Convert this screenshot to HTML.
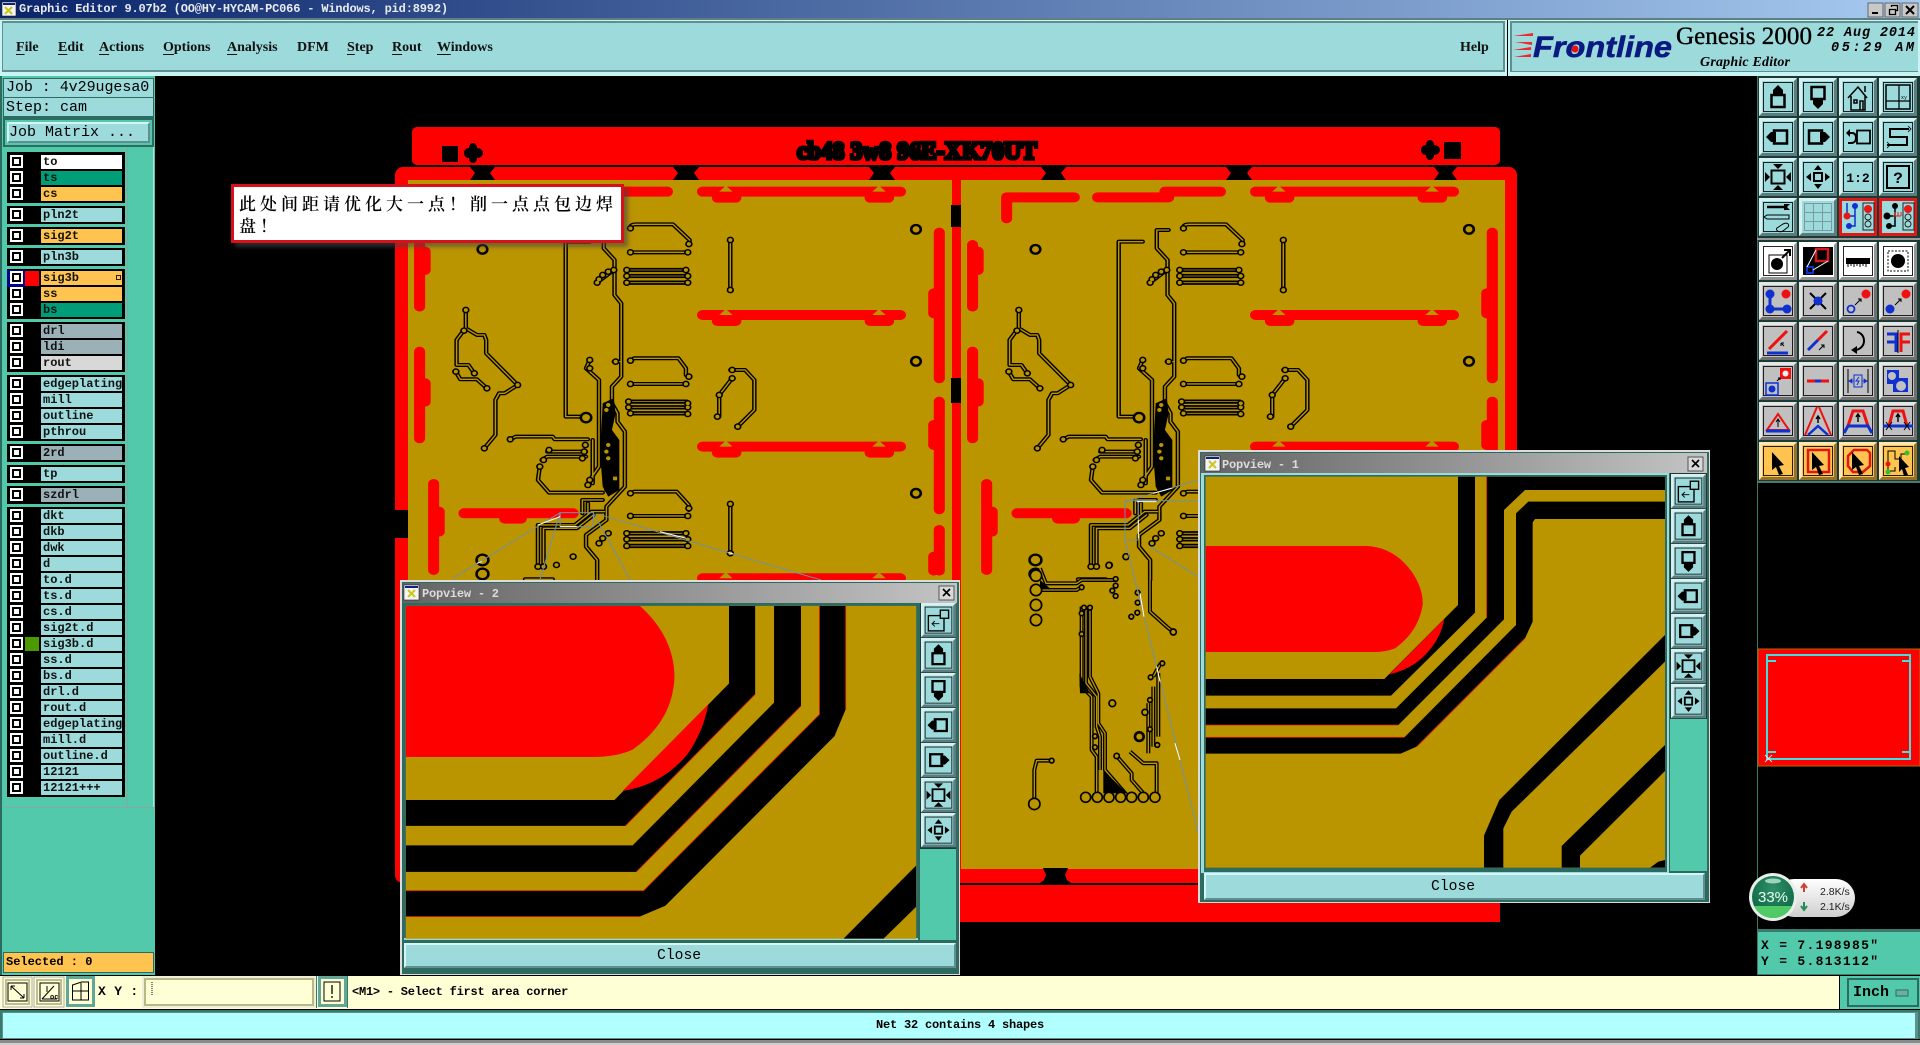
<!DOCTYPE html>
<html><head><meta charset="utf-8"><title>Graphic Editor</title>
<style>
html,body{margin:0;padding:0;background:#000;width:1920px;height:1045px;overflow:hidden}
body{position:relative;font-family:"Liberation Mono",monospace;color:#000}
div,span,b,i{position:absolute;display:block}
#art{position:absolute;left:0;top:0}
.t{white-space:pre}
.mn{font:bold 14px/16px "Liberation Serif",serif;top:40px;white-space:pre;color:#111}
.mn u{position:static;display:inline;text-underline-offset:3px}
.g{background:#000;left:7px;width:118px}
.r{left:7px;width:118px;height:16px;margin-top:1px}
.r i{left:5px;top:2px;width:5px;height:5px;background:#fff;border:2px solid #000;outline:2px solid #fff}
.r b{left:34px;top:0;width:79px;height:14px;padding-left:2px;background:#9cdadb;font:bold 12px/14px "Liberation Mono",monospace;overflow:hidden;white-space:pre;color:#111}
.r b.o{background:#ffc34f}.r b.w{background:#fff}.r b.e{background:#009e78}.r b.s{background:#9cb0b8}.r b.l{background:#d8d8d8}
#tip{left:231px;top:184px;width:379px;height:48px;padding:5px 3px 0 5px;border:3px solid #d8101a;background:#fff;box-shadow:4px 4px 4px rgba(70,70,70,.6);font:17px/22px "Noto Serif CJK SC","Liberation Serif",serif;letter-spacing:4px;font-weight:600;color:#000}
#tip span{position:static;display:block;white-space:pre}
</style></head><body>

<svg id="art" width="1920" height="1045" viewBox="0 0 1920 1045" xmlns="http://www.w3.org/2000/svg">
<defs>
<linearGradient id="tbar" x1="0" x2="1" y1="0" y2="0"><stop offset="0" stop-color="#0a246a"/><stop offset="1" stop-color="#a6caf0"/></linearGradient>
<linearGradient id="pbar" x1="0" x2="1" y1="0" y2="0"><stop offset="0" stop-color="#646464"/><stop offset="1" stop-color="#c4c4c4"/></linearGradient>
<radialGradient id="gb" cx=".5" cy=".3" r=".7"><stop offset="0" stop-color="#2f8f68"/><stop offset="1" stop-color="#0c6642"/></radialGradient>
<linearGradient id="pill" x1="0" x2="0" y1="0" y2="1"><stop offset="0" stop-color="#fff"/><stop offset="1" stop-color="#cfcfcf"/></linearGradient>

<g id="b"><rect width="38" height="38"/><path d="M0 0H38L35 3H3V35L0 38Z" fill="#fff" fill-opacity=".6"/><path d="M38 38H0L3 35H35V3L38 0Z" fill="#000" fill-opacity=".42"/><rect x="4.500" y="4.500" width="29" height="29" fill="none" stroke="#000" stroke-opacity=".85"/></g>
<g id="b0"><rect width="38" height="38"/><path d="M0 0H38L35 3H3V35L0 38Z" fill="#fff" fill-opacity=".6"/><path d="M38 38H0L3 35H35V3L38 0Z" fill="#000" fill-opacity=".42"/></g>

<g id="iU"><path d="M12.500 17h13v12h-13z" fill="none" stroke="#000" stroke-width="2.500"/><path d="M19 7l5 5v5H14v-5z"/></g>
<g id="iD"><path d="M12.500 9h13v12h-13z" fill="none" stroke="#000" stroke-width="2.500"/><path d="M19 31l5-5v-5H14v5z"/></g>
<g id="iL"><path d="M15 12.500h13v13H15z" fill="none" stroke="#000" stroke-width="2.500"/><path d="M7 19l5-5h5v10h-5z"/></g>
<g id="iR"><path d="M10 12.500h13v13H10z" fill="none" stroke="#000" stroke-width="2.500"/><path d="M31 19l-5-5h-5v10h5z"/></g>
<g id="iF"><rect x="12.500" y="12.500" width="13" height="13" fill="none" stroke="#000" stroke-width="2"/><path d="M19 11l-5-5h10zM19 27l-5 5h10zM11 19l-5-5v10zM27 19l5-5v10z"/></g>
<g id="iS"><rect x="15" y="15" width="8" height="8" fill="none" stroke="#000" stroke-width="2"/><path d="M19 7l-4 5h8zM19 31l-4-5h8zM7 19l5-4v8zM31 19l-5-4v8z"/></g>
<g id="iZ"><rect x="8" y="14" width="17" height="17" fill="none" stroke="#000" stroke-width="1.500"/><rect x="21" y="8" width="9" height="9" fill="#9cdadb" stroke="#000" stroke-width="1.500"/><path d="M20 23h-8M15 20l-3 3 3 3" fill="none" stroke="#000"/></g>
<g id="cur"><path d="M13 10l12 13-5 1 4 8-4 1-3-8-4 3z"/></g>

<g id="tp" fill="none" stroke-linejoin="round" stroke-linecap="round">
<path d="M648 325Q650 313 665 313H765L810 360V375M650 397H805M650 722L660 715H780L800 745V765L808 772M650 792H800M650 1120L660 1115H775L808 1155V1170M650 1188H805M920 360V510M920 1155V1300M540 365H475V890H530M610 330H578V385L607 420V525L625 550V725H605M625 725V770L600 800V850L615 880V905L635 935V1100L585 1160V1200L530 1245V1280L560 1320V1380M605 450L560 488M205 570V625L235 645H255L260 660V700L345 795L310 820H295L285 840V945L255 985M200 630L180 660V735H212L228 760M178 755L190 778H235L262 805M325 958L340 950H440L445 958H535M405 1040L400 1080L430 1118H575M425 995H530M410 1020L425 1010H530M540 720L530 745L565 780V1040L540 1080M548 960V1090M590 1050L585 1110M920 750H960L985 780V870L940 920M925 775L890 825V890M400 1340V1215H500L545 1175H580M415 1340V1225H505L550 1185M520 1140H575M520 1140V1180M535 1150V1180M365 1378H440"/>
</g>
<g id="tq" fill="none" stroke-linecap="butt">
<path d="M640 450H805M640 468H805M640 488H805M645 845H805M645 862H805M650 880H805M640 1240H805M640 1258H805M640 1278H805"/>
</g>
<g id="pads" fill="none" stroke-linecap="round">
<path d="M650 325h.1M808 372h.1M650 397h.1M805 397h.1M640 450h.1M800 450h.1M640 468h.1M805 468h.1M640 488h.1M805 488h.1M920 360h.1M920 510h.1M650 722h.1M808 770h.1M650 792h.1M800 792h.1M645 845h.1M805 850h.1M645 862h.1M805 862h.1M650 880h.1M805 882h.1M650 1120h.1M808 1165h.1M650 1188h.1M805 1188h.1M640 1240h.1M800 1240h.1M640 1258h.1M805 1258h.1M640 1278h.1M805 1278h.1M920 1152h.1M920 1300h.1M205 570h.1M200 632h.1M228 760h.1M178 755h.1M262 805h.1M345 795h.1M255 985h.1M325 958h.1M885 890h.1M940 920h.1M925 750h.1M925 775h.1M890 825h.1M610 725h.1M540 720h.1M540 745h.1M605 450h.1M590 455h.1M575 465h.1M565 478h.1M560 488h.1M528 975h.1M525 995h.1M520 1015h.1M405 1040h.1M415 1020h.1M430 990h.1M540 1080h.1M535 1095h.1M590 1240h.1M575 1255h.1M565 1270h.1M400 1340h.1M415 1340h.1M495 1310h.1M450 1335h.1"/>
</g>
<g id="rb" fill="none" stroke="#f00" stroke-width="30" stroke-linecap="round"><path d="M845 0H1380"/><path d="M885 18H935M1298 18H1348"/><path d="M908 -18l-18 18h36z" fill="#bb9500" stroke="none"/><path d="M1322 -18l-18 18h36z" fill="#bb9500" stroke="none"/></g>
<g id="board">
<g transform="translate(390 120) scale(.3699 .3333)">
<use href="#rb" transform="translate(0 215)"/><use href="#rb" transform="translate(0 585)"/><use href="#rb" transform="translate(0 980)"/><use href="#rb" transform="translate(0 1375)"/>
<g fill="none" stroke="#f00" stroke-width="30" stroke-linecap="round">
<path d="M80 375V560M80 695V955M118 1092V1350M200 1180H495M1485 338V775M1485 845V1168M1485 1230V1352"/>
<path d="M95 395V450M95 790V845M133 1175V1235M310 1196H355M1470 520V580M1470 915V975M1470 1310V1352"/>
<path d="M175 232H355M418 232H610M600 215H750M172 232V295"/>
</g>
<use href="#tp" stroke="#000" stroke-width="12"/><use href="#tp" stroke="#bb9500" stroke-width="4"/>
<use href="#tq" stroke="#000" stroke-width="13"/><use href="#tq" stroke="#bb9500" stroke-width="2.500"/>
<path d="M575 850L605 835 610 880 600 930 620 960V1110L590 1130 575 1100 568 1000Z"/>
<use href="#pads" stroke="#000" stroke-width="20"/><use href="#pads" stroke="#bb9500" stroke-width="11"/>
<g fill="#bb9500" stroke="#000" stroke-width="7"><circle cx="1422" cy="328" r="13"/><circle cx="1422" cy="724" r="13"/><circle cx="1422" cy="1120" r="13"/><circle cx="250" cy="388" r="13"/><circle cx="530" cy="893" r="14"/><circle cx="250" cy="1320" r="16"/><circle cx="250" cy="1362" r="16"/></g>
<g fill="#bb9500"><circle cx="590" cy="855" r="6"/><circle cx="585" cy="870" r="6"/><circle cx="590" cy="975" r="6"/><circle cx="585" cy="995" r="6"/><circle cx="590" cy="1015" r="6"/><rect x="603" y="1070" width="11" height="11"/></g>
</g></g>
<clipPath id="c2"><rect x="16" y="107" width="1404" height="991"/></clipPath>
<clipPath id="c1"><rect x="32" y="95" width="1378" height="1173"/></clipPath>
</defs>

<!-- title -->
<rect width="1920" height="19" fill="url(#tbar)"/>
<rect x="0" y="18" width="1920" height="2" fill="#5f8080"/>
<rect x="2" y="2" width="14" height="14" fill="#f5f5f5" stroke="#222" stroke-width=".6"/><rect x="3" y="3" width="12" height="2" fill="#10208a"/><path d="M5 7l7 7M12 7l-7 7" stroke="#c8c820" stroke-width="2.200"/>
<g stroke="#666"><rect x="1868" y="3" width="15" height="14" fill="#c8c8c8"/><rect x="1885" y="3" width="15" height="14" fill="#c8c8c8"/><rect x="1902" y="3" width="16" height="14" fill="#c8c8c8"/></g>
<path d="M1872 13h6" stroke="#000" stroke-width="2"/><path d="M1889.500 9.500h6v5h-6zM1891.500 7v-1.500h6v5h-2" fill="none" stroke="#000" stroke-width="1.300"/><path d="M1906 6l8 8M1914 6l-8 8" stroke="#000" stroke-width="2"/>

<!-- menu bar -->
<rect x="0" y="20" width="1507" height="56" fill="#c8f4f4"/><rect x="2" y="21" width="1503" height="51" fill="#5f8f8f"/><rect x="3" y="23" width="1500" height="47" fill="#9cdadb"/>
<rect x="1508" y="20" width="412" height="56" fill="#c8f4f4"/><rect x="1510" y="21" width="408" height="51" fill="#5f8f8f"/><rect x="1512" y="23" width="406" height="48" fill="#9cdadb"/>
<path d="M1513 36l20-3v3zM1515 42h17v3zM1513 50l18-3v3zM1514 57l17-3v3z" fill="#f0282c"/>
<text x="1533" y="57" font-family="Liberation Sans" font-weight="bold" font-style="italic" font-size="30" fill="#0a1a80" stroke="#0a1a80" stroke-width=".6" textLength="139" lengthAdjust="spacingAndGlyphs">Frontline</text>
<circle cx="1575" cy="49" r="3.500" fill="#e81018"/>
<text x="1676" y="44" font-family="Liberation Serif" font-size="25" fill="#000" stroke="#000" stroke-width=".35" textLength="136" lengthAdjust="spacingAndGlyphs">Genesis 2000</text>
<text x="1700" y="66" font-family="Liberation Serif" font-size="14" font-weight="bold" font-style="italic" fill="#000" textLength="90">Graphic Editor</text>
<text x="1817" y="36" font-family="Liberation Mono" font-size="13.500" font-weight="bold" font-style="italic" textLength="98">22 Aug 2014</text>
<text x="1831" y="51" font-family="Liberation Mono" font-size="13.500" font-weight="bold" font-style="italic" textLength="83">05:29 AM</text>

<!-- left panel -->
<rect x="0" y="76" width="155" height="900" fill="#52c9aa"/><rect x="0" y="76" width="2" height="900" fill="#2d6b60"/><rect x="127" y="147" width="1" height="660" fill="#86a8a0"/><rect x="153" y="147" width="1" height="660" fill="#a8e8d4"/>
<rect x="3" y="78" width="151" height="40" fill="#2d6b60"/><rect x="4" y="79" width="149" height="18" fill="#9cdadb"/><rect x="4" y="98" width="149" height="18" fill="#9cdadb"/>
<rect x="3" y="118" width="151" height="29" fill="#2d6b60"/><rect x="5" y="120" width="147" height="25" fill="#52c9aa"/><rect x="7" y="122" width="143" height="21" fill="#9cdadb"/><path d="M7 122h143l-2 2H9v17l-2 2z" fill="#d4f6f6"/><path d="M150 143H7l2-2h139V124l2-2z" fill="#5f8f8f"/>
<rect x="3" y="807" width="151" height="1" fill="#86a8a0"/>
<rect x="3" y="952" width="151" height="21" fill="#2d6b60"/><rect x="4" y="953" width="149" height="19" fill="#ffc34f"/>

<!-- PCB -->
<rect x="412" y="127" width="1088" height="38" rx="5" fill="#f00"/>
<rect x="395" y="167" width="1122" height="716" rx="8" fill="#f00"/>
<rect x="412" y="885" width="1088" height="37" fill="#f00"/>
<rect x="408" y="180" width="544" height="689" fill="#bb9500"/><rect x="961" y="180" width="544" height="689" fill="#bb9500"/>
<g><path d="M470 167h25l-5 6 5 7h-25l5-7zM673 167h26l-5 6 5 7h-26l5-7zM869 167h26l-5 6 5 7h-26l5-7zM1041 167h25l-5 6 5 7h-25l5-7zM1226 167h26l-5 6 5 7h-26l5-7zM1434 167h23l-5 6 5 7h-23l5-7z"/>
<rect x="951" y="205" width="10" height="22"/><rect x="951" y="378" width="10" height="25"/><rect x="395" y="510" width="13" height="28"/>
<path d="M1040 883l4-3 2-5-3-7h25l-3 7 2 5 4 3z"/>
<rect x="442" y="146" width="16" height="16"/><path d="M473 143c3 0 4 3 4 5 3 0 6 2 6 5s-3 5-6 5c0 2-1 5-4 5s-4-3-4-5c-3 0-5-2-5-5s2-5 5-5c0-2 1-5 4-5z"/>
<rect x="1444" y="142" width="17" height="17"/><path d="M1430 140c3 0 4 3 4 5 3 0 6 2 6 5s-3 5-6 5c0 2-1 5-4 5s-4-3-4-5c-3 0-5-2-5-5s2-5 5-5c0-2 1-5 4-5z"/>
<text x="797" y="159" font-family="Liberation Serif" font-weight="bold" font-size="25" stroke="#000" stroke-width="3.500" textLength="240" lengthAdjust="spacingAndGlyphs">cb48 3w8 96E-XK70UT</text></g>
<use href="#board"/><use href="#board" transform="translate(553 0)"/>
<!-- lower right traces -->
<g transform="translate(940 460) scale(.3333)">
<g fill="none" stroke="#000" stroke-width="12" stroke-linejoin="round">
<path d="M630 360V455L680 500L705 520M300 325L318 370H410L425 360H525M290 390H410L425 380M425 440V680L455 710V870L470 890V1010M438 440V670L470 710V800L480 830V930M450 440V650L475 700V790L495 820V930L560 1005M335 902H290L283 930V1030M530 888L575 940V960L610 1000M570 875L610 910H650V1000M640 680V860M655 640V830M625 730V880M662 610L640 650"/>
</g>
<g fill="none" stroke="#bb9500" stroke-width="4" stroke-linejoin="round">
<path d="M630 360V455L680 500L705 520M300 325L318 370H410L425 360H525M290 390H410L425 380M425 440V680L455 710V870L470 890V1010M438 440V670L470 710V800L480 830V930M450 440V650L475 700V790L495 820V930L560 1005M335 902H290L283 930V1030M530 888L575 940V960L610 1000M570 875L610 910H650V1000M640 680V860M655 640V830M625 730V880M662 610L640 650"/>
</g>
<path d="M490 930L560 1000H490ZM418 640L450 700H420ZM300 360L330 385H300Z"/>
<g fill="#bb9500" stroke="#000" stroke-width="5"><circle cx="288" cy="347" r="17"/><circle cx="288" cy="390" r="17"/><circle cx="288" cy="435" r="17"/><circle cx="288" cy="480" r="17"/><circle cx="437" cy="1012" r="15"/><circle cx="472" cy="1012" r="15"/><circle cx="507" cy="1012" r="15"/><circle cx="542" cy="1012" r="15"/><circle cx="575" cy="1012" r="15"/><circle cx="610" cy="1012" r="15"/><circle cx="645" cy="1012" r="15"/><circle cx="283" cy="1032" r="17"/><circle cx="598" cy="830" r="13" stroke-width="8"/><circle cx="517" cy="730" r="10"/><circle cx="507" cy="316" r="9"/><circle cx="558" cy="290" r="9"/><circle cx="527" cy="357" r="7"/><circle cx="527" cy="377" r="7"/><circle cx="517" cy="392" r="7"/><circle cx="527" cy="408" r="7"/><circle cx="425" cy="382" r="7"/><circle cx="593" cy="398" r="7"/><circle cx="593" cy="428" r="7"/><circle cx="592" cy="458" r="7"/><circle cx="574" cy="470" r="7"/><circle cx="630" cy="720" r="7"/><circle cx="615" cy="757" r="9"/><circle cx="630" cy="808" r="7"/><circle cx="652" cy="855" r="7"/><circle cx="632" cy="652" r="7"/><circle cx="667" cy="610" r="7"/><circle cx="425" cy="460" r="7"/><circle cx="432" cy="443" r="7"/><circle cx="450" cy="443" r="7"/><circle cx="425" cy="522" r="7"/><circle cx="465" cy="829" r="7"/><circle cx="465" cy="862" r="7"/><circle cx="335" cy="902" r="7"/><circle cx="530" cy="888" r="8"/><circle cx="700" cy="516" r="9"/></g>
<g fill="none" stroke="#7390a4" stroke-width="3"><path d="M555 125L775 60M555 240L775 1120M630 260L775 350M555 122V240H595V122ZM555 122H775"/></g>
<path d="M600 400L612 470M650 620L660 665M640 100L695 85M590 125H650M595 180V235M705 850L720 900" stroke="#fff" stroke-width="3" fill="none"/>
</g>
<!-- left lens lines -->
<g transform="translate(390 120) scale(.3699 .3333)" fill="none">
<path d="M460 1178L170 1375M460 1178L405 1380M550 1180L650 1380M570 1185L1165 1380M460 1178H550V1220H460Z" stroke="#7390a4" stroke-width="3"/>
<path d="M400 1215L460 1190M460 1220H505M730 1235L800 1255M915 1298L928 1302M235 1330L248 1325" stroke="#fff" stroke-width="3"/>
</g>

<!-- Popup 2 -->
<rect x="400" y="580" width="560" height="395" fill="#dcdcdc"/><rect x="402" y="582" width="557" height="392" fill="#2d6b60"/><rect x="403" y="583" width="554" height="20" fill="url(#pbar)"/>
<rect x="403" y="603" width="516" height="338" fill="#2d6b60"/><rect x="404" y="938" width="514" height="2" fill="#9cdadb"/>
<rect x="920" y="603" width="36" height="337" fill="#52c9aa"/><rect x="920" y="603" width="36" height="246" fill="#1c3a34"/>
<rect x="404" y="585" width="15" height="15" fill="#f5f5f5" stroke="#222" stroke-width=".6"/><rect x="405" y="586" width="13" height="2" fill="#10208a"/><path d="M408 590l7 7M415 590l-7 7" stroke="#c8c820" stroke-width="2"/>
<text x="422" y="597" font-family="Liberation Mono" font-size="12" font-weight="bold" fill="#dcdcdc" textLength="77">Popview - 2</text>
<rect x="939" y="586" width="15" height="14" fill="#d8d8d8" stroke="#555"/><path d="M943 589l7 7M950 589l-7 7" stroke="#000" stroke-width="1.700"/>
<svg x="400" y="570" width="570" height="410" viewBox="0 0 1568 1221" preserveAspectRatio="none"><g clip-path="url(#c2)">
<rect width="1568" height="1221" fill="#bb9500"/>
<path d="M16 107H660Q755 200 755 320Q750 450 640 535Q600 555 540 557H16Z" fill="#f00"/>
<path d="M905 107H977V370L620 762H16V685H590L905 338Z"/>
<path d="M848 400Q835 480 790 550Q720 640 612 658Z" fill="#f00"/>
<path d="M1029 107H1103V405L650 899H16V820H640L1029 395Z"/>
<path d="M1154 107H1226V415L1195 495 730 1000 660 1032H16V955H670L1154 430Z"/>
<path d="M1420 880V1003L1330 1098H1220Z"/>
<path d="M1154 107V430L670 955H16M1226 107V415M1103 405L650 899M977 370L620 762M16 1032H660" fill="none" stroke="#d02000" stroke-width="2.500"/>
</g></svg>
<g transform="translate(404 943)"><rect width="552" height="25" fill="#9cdadb"/><path d="M0 0H552L550 2H2V23L0 25Z" fill="#d4f6f6"/><path d="M552 25H0L2 23H550V2L552 0Z" fill="#5f8f8f"/></g>
<text x="657" y="959" font-family="Liberation Mono" font-size="14.700">Close</text>
<g transform="translate(921 603) scale(.92 .9)"><use href="#b" fill="#9cdadb"/><use href="#iZ"/></g>
<g transform="translate(921 638) scale(.92 .9)"><use href="#b" fill="#9cdadb"/><use href="#iU"/></g>
<g transform="translate(921 673) scale(.92 .9)"><use href="#b" fill="#9cdadb"/><use href="#iD"/></g>
<g transform="translate(921 708) scale(.92 .9)"><use href="#b" fill="#9cdadb"/><use href="#iL"/></g>
<g transform="translate(921 743) scale(.92 .9)"><use href="#b" fill="#9cdadb"/><use href="#iR"/></g>
<g transform="translate(921 778) scale(.92 .9)"><use href="#b" fill="#9cdadb"/><use href="#iF"/></g>
<g transform="translate(921 813) scale(.92 .9)"><use href="#b" fill="#9cdadb"/><use href="#iS"/></g>

<!-- Popup 1 -->
<rect x="1198" y="450" width="512" height="453" fill="#dcdcdc"/><rect x="1200" y="452" width="509" height="450" fill="#2d6b60"/><rect x="1201" y="453" width="506" height="20" fill="url(#pbar)"/>
<rect x="1201" y="473" width="468" height="400" fill="#9cdadb"/><rect x="1204" y="475" width="463" height="397" fill="#2d6b60"/>
<rect x="1670" y="473" width="37" height="398" fill="#52c9aa"/><rect x="1670" y="473" width="37" height="246" fill="#1c3a34"/>
<rect x="1205" y="456" width="15" height="15" fill="#f5f5f5" stroke="#222" stroke-width=".6"/><rect x="1206" y="457" width="13" height="2" fill="#10208a"/><path d="M1209 461l7 7M1216 461l-7 7" stroke="#c8c820" stroke-width="2"/>
<text x="1222" y="468" font-family="Liberation Mono" font-size="12" font-weight="bold" fill="#dcdcdc" textLength="77">Popview - 1</text>
<rect x="1688" y="457" width="15" height="14" fill="#d8d8d8" stroke="#555"/><path d="M1692 460l7 7M1699 460l-7 7" stroke="#000" stroke-width="1.700"/>
<svg x="1195" y="445" width="520" height="470" viewBox="0 0 1560 1410" preserveAspectRatio="none"><g clip-path="url(#c1)">
<rect width="1560" height="1410" fill="#bb9500"/>
<path d="M32 303H520Q600 310 650 380Q685 430 683 480Q670 560 600 610Q570 622 530 621H32Z" fill="#f00"/>
<path d="M789 95H840V503L588 752H32V702H568L789 480Z"/>
<path d="M748 522Q735 590 680 640Q640 675 583 688Z" fill="#f00"/>
<path d="M875 95H1410V135H990L927 195V523L610 840H32V790H603L875 518Z"/>
<path d="M963 205L1000 170H1410V222H1020L1013 232V530L990 580 665 905 617 926H32V877H628L963 540Z"/>
<path d="M1410 570V650L950 1100 925 1150V1268H867V1172L913 1065Z"/>
<path d="M1410 900V978L1155 1232V1268H1100V1203Z"/>
<path d="M1365 1268L1390 1250 1410 1245V1268Z"/>
<path d="M875 95V518M32 840H610M32 877H628M990 580L665 905" fill="none" stroke="#d02000" stroke-width="2.500"/>
</g></svg>
<g transform="translate(1204 873)"><rect width="501" height="27" fill="#9cdadb"/><path d="M0 0H501L499 2H2V25L0 27Z" fill="#d4f6f6"/><path d="M501 27H0L2 25H499V2L501 0Z" fill="#5f8f8f"/></g>
<text x="1431" y="890" font-family="Liberation Mono" font-size="14.700">Close</text>
<g transform="translate(1671 474) scale(.92 .9)"><use href="#b" fill="#9cdadb"/><use href="#iZ"/></g>
<g transform="translate(1671 509) scale(.92 .9)"><use href="#b" fill="#9cdadb"/><use href="#iU"/></g>
<g transform="translate(1671 544) scale(.92 .9)"><use href="#b" fill="#9cdadb"/><use href="#iD"/></g>
<g transform="translate(1671 579) scale(.92 .9)"><use href="#b" fill="#9cdadb"/><use href="#iL"/></g>
<g transform="translate(1671 614) scale(.92 .9)"><use href="#b" fill="#9cdadb"/><use href="#iR"/></g>
<g transform="translate(1671 649) scale(.92 .9)"><use href="#b" fill="#9cdadb"/><use href="#iF"/></g>
<g transform="translate(1671 684) scale(.92 .9)"><use href="#b" fill="#9cdadb"/><use href="#iS"/></g>

<!-- right panel -->
<rect x="1757" y="76" width="163" height="406" fill="#1c3a34"/>
<rect x="1757" y="76" width="1" height="900" fill="#3a7a6c"/>
<rect x="1757" y="238" width="163" height="2" fill="#9a9a9a"/>
<g transform="translate(1759 78)"><use href="#b" fill="#9cdadb"/><use href="#iU"/></g>
<g transform="translate(1799 78)"><use href="#b" fill="#9cdadb"/><use href="#iD"/></g>
<g transform="translate(1839 78)"><use href="#b" fill="#9cdadb"/><path d="M9 20L19 9l9 11M12 18v14h14V18M15 22h3v3h-3zM21 32v-9h3v9M26 8v6" fill="none" stroke="#000" stroke-width="1.500"/></g>
<g transform="translate(1879 78)"><use href="#b" fill="#9cdadb"/><rect x="7" y="7" width="24" height="24" fill="none" stroke="#000" stroke-width="1.500"/><path d="M7 23H31M20 7V31" stroke="#000" stroke-width="1.200"/><text x="22" y="21" font-size="5" font-family="Liberation Mono">xy</text></g>

<g transform="translate(1759 118)"><use href="#b" fill="#9cdadb"/><use href="#iL"/></g>
<g transform="translate(1799 118)"><use href="#b" fill="#9cdadb"/><use href="#iR"/></g>
<g transform="translate(1839 118)"><use href="#b" fill="#9cdadb"/><rect x="18" y="12.500" width="13" height="13" fill="none" stroke="#000" stroke-width="1.800"/><path d="M9 15h4c3 0 4 2 4 5s-2 5-5 5H9" fill="none" stroke="#000" stroke-width="2"/><path d="M7 15l4-4v8z"/></g>
<g transform="translate(1879 118)"><use href="#b" fill="#9cdadb"/><path d="M30 11H11V19H28V27H8" fill="none" stroke="#000" stroke-width="2"/><path d="M29 8l3 3-3 3M8 24l3 3-3 3" fill="none" stroke="#000" stroke-width=".8"/></g>

<g transform="translate(1759 158)"><use href="#b" fill="#9cdadb"/><use href="#iF"/></g>
<g transform="translate(1799 158)"><use href="#b" fill="#9cdadb"/><use href="#iS"/></g>
<g transform="translate(1839 158)"><use href="#b" fill="#9cdadb"/><text x="19" y="24" text-anchor="middle" font-family="Liberation Mono" font-weight="bold" font-size="13">1:2</text></g>
<g transform="translate(1879 158)"><use href="#b" fill="#9cdadb"/><rect x="8" y="8" width="22" height="22" fill="none" stroke="#000" stroke-width="2"/><text x="19" y="25" text-anchor="middle" font-family="Liberation Mono" font-weight="bold" font-size="16">?</text></g>

<g transform="translate(1759 198)"><use href="#b" fill="#9cdadb"/><path d="M8 9H27" stroke="#000" stroke-width="2.500"/><path d="M25 6h6l-3 3 3 3h-6z"/><path d="M8 17H30V21H8L5 19zM24 26c4-2 7 0 5 3l-5 4c-4 2-8-1-6-3z" fill="none" stroke="#000"/></g>
<g transform="translate(1799 198)"><use href="#b0" fill="#9cdadb"/><path d="M5.500 5.500H32.500V32.500H5.500ZM14.500 5.500V32.500M23.500 5.500V32.500M5.500 14.500H32.500M5.500 23.500H32.500" fill="none" stroke="#7a9a9c"/></g>
<g transform="translate(1839 198)"><rect width="38" height="38" fill="#e01818"/><rect x="3" y="3" width="32" height="32" fill="#9cdadb"/><rect x="24" y="5" width="11" height="27" fill="none" stroke="#222"/><circle cx="29" cy="11" r="4" fill="#e81818"/><circle cx="29" cy="19" r="3" fill="none" stroke="#222"/><circle cx="29" cy="26" r="3" fill="none" stroke="#222"/><path d="M16 7V18H8M8 18V5M16 18V28H10" fill="none" stroke="#1030d0" stroke-width="1.500"/><circle cx="16" cy="8" r="3" fill="#1030d0"/><circle cx="8" cy="18" r="3.500" fill="#e81818"/><circle cx="10" cy="28" r="3" fill="#1030d0"/></g>
<g transform="translate(1879 198)"><rect width="38" height="38" fill="#e01818"/><rect x="3" y="3" width="32" height="32" fill="#9cdadb"/><rect x="24" y="5" width="11" height="27" fill="none" stroke="#222"/><circle cx="29" cy="11" r="4" fill="#e81818"/><circle cx="29" cy="19" r="3" fill="none" stroke="#222"/><circle cx="29" cy="26" r="3" fill="none" stroke="#222"/><path d="M16 7V28H10M8 18H16" fill="none" stroke="#000" stroke-width="1.500"/><path d="M14 18h8M16 18v-4M19 18v-4M22 18v-4" stroke="#e81818" fill="none"/><circle cx="16" cy="8" r="3"/><circle cx="8" cy="18" r="3.500"/><circle cx="10" cy="28" r="3"/></g>

<!-- row 5 white -->
<g transform="translate(1759 242)"><use href="#b" fill="#fff"/><rect x="10" y="13" width="18" height="18" fill="none" stroke="#000"/><circle cx="18" cy="22" r="6"/><path d="M23 16l7-7M25 8h6v6" stroke="#000" stroke-width="2" fill="none"/></g>
<g transform="translate(1799 242)"><use href="#b0" fill="#fff"/><rect x="4" y="5" width="30" height="28"/><rect x="17" y="7" width="12" height="12" fill="none" stroke="#d81818" stroke-width="2.500"/><rect x="8" y="25" width="6" height="6" fill="none" stroke="#1030d0" stroke-width="2"/><path d="M17 8L8 25M29 19L14 28" stroke="#fff"/></g>
<g transform="translate(1839 242)"><use href="#b" fill="#fff"/><rect x="7" y="16" width="24" height="6"/><path d="M9 22v3M12 22v2M15 22v3M18 22v2M21 22v3M24 22v2M27 22v3" stroke="#000"/></g>
<g transform="translate(1879 242)"><use href="#b" fill="#fff"/><rect x="9" y="9" width="20" height="20" fill="none" stroke="#000" stroke-dasharray="2 1.500"/><circle cx="19" cy="19" r="7"/></g>

<!-- row 6 gray -->
<g transform="translate(1759 282)"><use href="#b" fill="#c0c0c0"/><path d="M11 13V27H28" stroke="#1030d0" stroke-width="3" fill="none"/><circle cx="11" cy="12" r="4.500" fill="#1030d0"/><circle cx="11" cy="27" r="4.500" fill="#1030d0"/><circle cx="28" cy="27" r="4.500" fill="#1030d0"/><circle cx="27" cy="12" r="4.500" fill="#f01010"/></g>
<g transform="translate(1799 282)"><use href="#b" fill="#c0c0c0"/><path d="M11 11l16 16M27 11L11 27" stroke="#000" stroke-width="2"/><circle cx="19" cy="19" r="4.500" fill="#1030d0"/></g>
<g transform="translate(1839 282)"><use href="#b" fill="#c0c0c0"/><circle cx="27" cy="12" r="4.500" fill="#f01010"/><circle cx="12" cy="27" r="3.500" fill="none" stroke="#1030d0" stroke-width="1.800"/><path d="M16 23l6-6M19 17h3v3" stroke="#000" fill="none"/></g>
<g transform="translate(1879 282)"><use href="#b" fill="#c0c0c0"/><circle cx="27" cy="12" r="4.500" fill="#f01010"/><circle cx="11" cy="27" r="4.500" fill="#1030d0"/><path d="M16 23l6-6M19 17h3v3" stroke="#000" fill="none"/></g>

<!-- row 7 -->
<g transform="translate(1759 322)"><use href="#b" fill="#c0c0c0"/><path d="M10 27L28 9" stroke="#f01010" stroke-width="3"/><path d="M8 31H29" stroke="#1030d0" stroke-width="3"/><path d="M25 24l-3-3M22 21v3M22 21h3" stroke="#000" fill="none"/></g>
<g transform="translate(1799 322)"><use href="#b" fill="#c0c0c0"/><path d="M9 28L19 18" stroke="#1030d0" stroke-width="3"/><path d="M19 18L28 9" stroke="#f01010" stroke-width="3"/><path d="M20 28l5-5M22 23h3v3" stroke="#000" fill="none"/></g>
<g transform="translate(1839 322)"><use href="#b" fill="#c0c0c0"/><path d="M18 10c5 1 7 5 7 9s-3 8-8 9" fill="none" stroke="#000" stroke-width="2"/><path d="M12 28l6-4v8z"/></g>
<g transform="translate(1879 322)"><use href="#b" fill="#c0c0c0"/><path d="M8 12H17V30M8 20H17" stroke="#1030d0" stroke-width="3" fill="none"/><path d="M19 8V31" stroke="#000"/><path d="M31 12H22V30M22 20H31" stroke="#f01010" stroke-width="3" fill="none"/></g>

<!-- row 8 -->
<g transform="translate(1759 362)"><use href="#b" fill="#c0c0c0"/><rect x="21" y="6" width="11" height="11" fill="#f01010"/><circle cx="26.500" cy="11.500" r="3" fill="#eee"/><rect x="7" y="21" width="12" height="12" fill="none" stroke="#1030d0" stroke-width="1.500"/><circle cx="13" cy="27" r="3.500" fill="#1030d0"/><path d="M18 19l3-3M19 16h2v2" stroke="#000" fill="none"/></g>
<g transform="translate(1799 362)"><use href="#b" fill="#c0c0c0"/><path d="M8 19H19" stroke="#f01010" stroke-width="3"/><path d="M16 19H22" stroke="#1030d0" stroke-width="3"/><path d="M22 19H30" stroke="#f01010" stroke-width="3"/></g>
<g transform="translate(1839 362)"><use href="#b" fill="#c0c0c0"/><path d="M9 7V31M29 7V31" stroke="#000"/><path d="M10 19H28M10 19l3-2v4zM28 19l-3-2v4z" stroke="#1030d0" fill="#1030d0" stroke-width=".8"/><rect x="15" y="13" width="8" height="12" fill="#c0c0c0" stroke="#1030d0"/><path d="M20 15l-3 4h3l-2 4" stroke="#1030d0" fill="none"/></g>
<g transform="translate(1879 362)"><use href="#b" fill="#c0c0c0"/><path d="M8 8H20V16H29V30H14V22H8Z" fill="#1030d0"/><circle cx="13" cy="14" r="4" fill="#c0c0c0"/><circle cx="22" cy="24" r="5" fill="#c0c0c0"/></g>

<!-- row 9 -->
<g transform="translate(1759 402)"><use href="#b" fill="#c0c0c0"/><path d="M8 28L19 12 30 28Z" fill="none" stroke="#f01010" stroke-width="2"/><path d="M7 29H31" stroke="#1030d0" stroke-width="3"/><path d="M19 25V18M17 20l2-3 2 3" stroke="#000" fill="none"/></g>
<g transform="translate(1799 402)"><use href="#b" fill="#c0c0c0"/><path d="M6 33L18 5M20 5L32 33" stroke="#f01010" stroke-width="2"/><path d="M9 33L19 24 29 33" stroke="#1030d0" stroke-width="2.500" fill="none"/><path d="M19 21V15M17 17l2-3 2 3" stroke="#000" stroke-width="1.400" fill="none"/></g>
<g transform="translate(1839 402)"><use href="#b" fill="#c0c0c0"/><path d="M9 24L14 9H24L29 24" stroke="#f01010" stroke-width="3" fill="none"/><path d="M5 31L9 24H29L33 31" stroke="#1030d0" stroke-width="3" fill="none"/><path d="M19 20V13M17 15l2-3 2 3" stroke="#000" stroke-width="1.400" fill="none"/></g>
<g transform="translate(1879 402)"><use href="#b" fill="#c0c0c0"/><path d="M10 24L14 9H24L28 24" stroke="#f01010" stroke-width="3" fill="none"/><path d="M4 24H34" stroke="#1030d0" stroke-width="3"/><path d="M7 20l6 8M13 20l-6 8M25 20l6 8M31 20l-6 8" stroke="#000"/><path d="M19 20V13M17 15l2-3 2 3" stroke="#000" stroke-width="1.400" fill="none"/></g>

<!-- row 10 orange -->
<g transform="translate(1759 442)"><use href="#b" fill="#ffc34f"/><use href="#cur"/></g>
<g transform="translate(1799 442)"><use href="#b" fill="#ffc34f"/><rect x="9" y="8" width="21" height="22" fill="none" stroke="#e01818" stroke-width="2.500"/><use href="#cur"/></g>
<g transform="translate(1839 442)"><use href="#b" fill="#ffc34f"/><path d="M15 8H28L31 11V24L24 30H14L9 24V14Z" fill="none" stroke="#e01818" stroke-width="2.500"/><use href="#cur"/></g>
<g transform="translate(1879 442)"><use href="#b" fill="#ffc34f"/><path d="M9 20V9H16V17H22V12H28M9 21V29H16L16 25" fill="none" stroke="#000"/><circle cx="9" cy="22" r="2.500" fill="#e01818"/><circle cx="28" cy="11" r="2.500" fill="#30c030"/><circle cx="9" cy="30" r="2.500" fill="#30c030"/><path d="M20 14l10 11-4 1 3 7-4 1-2-7-3 3z"/></g>
<rect x="1757" y="481" width="163" height="2" fill="#4a7a70"/>

<!-- preview -->
<rect x="1758" y="649" width="162" height="117" fill="#f00" stroke="#a87000"/>
<path d="M1767 655H1910V759H1767ZM1767 661H1776M1767 752H1776M1902 661H1910M1902 752H1910" fill="none" stroke="#40e0e0" stroke-width="2"/><path d="M1765 755l7 7M1772 755l-7 7" stroke="#e0e0e0"/>

<!-- net widget -->
<rect x="1775" y="879" width="80" height="38" rx="19" fill="url(#pill)"/>
<circle cx="1773" cy="897" r="24" fill="#e8eeea"/><circle cx="1773" cy="897" r="21" fill="url(#gb)"/>
<path d="M1754 906a21 21 0 0 0 38 0z" fill="#4fca66"/>
<ellipse cx="1773" cy="881" rx="8" ry="2.500" fill="#9fd4bc"/>
<text x="1773" y="902" text-anchor="middle" font-family="Liberation Sans" font-size="15" fill="#e8fff4">33%</text>
<path d="M1804 892v-7M1801 888l3-4 3 4" stroke="#d04030" stroke-width="2" fill="none"/><path d="M1804 902v7M1801 906l3 4 3-4" stroke="#2a8a58" stroke-width="2" fill="none"/>
<text x="1820" y="895" font-family="Liberation Sans" font-size="10.500" fill="#222">2.8K/s</text><text x="1820" y="910" font-family="Liberation Sans" font-size="10.500" fill="#222">2.1K/s</text>

<!-- coordinate panel -->
<rect x="1758" y="929" width="162" height="46" fill="#3a7a6c"/><rect x="1758" y="932" width="162" height="42" fill="#52c9aa"/>
<text x="1761" y="949" font-family="Liberation Mono" font-weight="bold" font-size="13" textLength="117">X = 7.198985"</text>
<text x="1761" y="965" font-family="Liberation Mono" font-weight="bold" font-size="13" textLength="117">Y = 5.813112"</text>

<!-- bottom bars -->
<rect x="0" y="975" width="1920" height="70" fill="#000"/>
<rect x="0" y="976" width="1839" height="33" fill="#ffffd6"/>
<rect x="1840" y="976" width="80" height="33" fill="#52c9aa"/><rect x="1848" y="979" width="70" height="27" fill="#52c9aa" stroke="#2d6b60" stroke-width="2"/>
<rect x="1896" y="990" width="12" height="6" fill="#6ab0a0" stroke="#2d6b60"/>
<g><rect x="3" y="977" width="29" height="30" fill="#ffffd6" stroke="#aaa"/><rect x="6" y="980" width="23" height="24" fill="none" stroke="#bdbd90" stroke-width="2"/><rect x="8" y="983" width="19" height="18" fill="#ffffd6" stroke="#000"/><path d="M11 986l13 12M11 986h4M11 986v4M24 998h-4M24 998v-4" stroke="#000" fill="none"/></g>
<g><rect x="34" y="977" width="30" height="30" fill="#ffffd6" stroke="#aaa"/><rect x="37" y="980" width="24" height="24" fill="none" stroke="#bdbd90" stroke-width="2"/><rect x="40" y="983" width="19" height="18" fill="#ffffd6" stroke="#000"/><path d="M42 999l12-13M42 999h15M47 986v6" stroke="#000" fill="none"/><text x="50" y="999" font-size="7" font-family="Liberation Mono" font-weight="bold">oc</text></g>
<g><rect x="66" y="976" width="29" height="31" fill="#5fa898"/><rect x="69" y="979" width="23" height="25" fill="#ffffd6"/><path d="M72.500 985l9-3h7v18h-16zM72.500 991h16M81 983v17" fill="none" stroke="#000"/></g>
<rect x="143" y="977" width="172" height="30" fill="#ffffd6" stroke="#ddd"/><rect x="145" y="979" width="168" height="26" fill="#ffffd6" stroke="#b8b880" stroke-width="2"/>
<path d="M152 982v14" stroke="#000" stroke-dasharray="1 1"/>
<rect x="318" y="976" width="29" height="31" fill="#5fa898"/><rect x="321" y="979" width="23" height="25" fill="#ffffd6"/><rect x="324" y="982" width="16" height="19" fill="#ffffd6" stroke="#000"/><path d="M332 985v9M332 996v2" stroke="#000" stroke-width="1.300"/>
<path d="M316.500 976v32M347.500 976v32" stroke="#3a7a6c"/>
<rect x="0" y="1010" width="1920" height="30" fill="#3a7a6c"/><rect x="2" y="1012" width="1916" height="27" fill="#5f8f8f"/><rect x="3" y="1013" width="1912" height="25" fill="#b2ffff"/>
<rect x="0" y="1040" width="1920" height="5" fill="#8a8a8a"/><rect x="0" y="1039" width="1920" height="1" fill="#000"/><rect x="0" y="1043" width="1920" height="2" fill="#cfcfcf"/>
</svg>

<!-- HTML text layer -->
<div class="t" style="left:19px;top:2px;font:bold 12px/15px 'Liberation Mono',monospace;color:#e8ecf0;letter-spacing:-.17px">Graphic Editor 9.07b2 (OO@HY-HYCAM-PC066 - Windows, pid:8992)</div>
<div class="mn" style="left:16px"><u>F</u>ile</div>
<div class="mn" style="left:58px"><u>E</u>dit</div>
<div class="mn" style="left:99px"><u>A</u>ctions</div>
<div class="mn" style="left:163px"><u>O</u>ptions</div>
<div class="mn" style="left:227px"><u>A</u>nalysis</div>
<div class="mn" style="left:297px">DFM</div>
<div class="mn" style="left:347px"><u>S</u>tep</div>
<div class="mn" style="left:392px"><u>R</u>out</div>
<div class="mn" style="left:437px"><u>W</u>indows</div>
<div class="mn" style="left:1460px">Help</div>

<div class="t" style="left:6px;top:79px;font:15px/18px 'Liberation Mono',monospace;letter-spacing:-.05px">Job : 4v29ugesa0</div>
<div class="t" style="left:6px;top:98px;font:15px/19px 'Liberation Mono',monospace">Step: cam</div>
<div class="t" style="left:9px;top:123px;font:15px/19px 'Liberation Mono',monospace">Job Matrix ...</div>
<div class="t" style="left:6px;top:954px;font:bold 12px/17px 'Liberation Mono',monospace">Selected : 0</div>

<div class="g" style="top:152px;height:51px"></div><div class="g" style="top:206px;height:18px"></div><div class="g" style="top:227px;height:18px"></div><div class="g" style="top:248px;height:18px"></div><div class="g" style="top:269px;height:50px"></div><div class="g" style="top:322px;height:50px"></div><div class="g" style="top:375px;height:66px"></div><div class="g" style="top:444px;height:18px"></div><div class="g" style="top:465px;height:18px"></div><div class="g" style="top:486px;height:18px"></div><div class="g" style="top:507px;height:290px"></div>
<div style="left:7px;top:270px;width:18px;height:17px;background:#00008a"></div><div style="left:25px;top:271px;width:14px;height:15px;background:#f00"></div><div style="left:25px;top:637px;width:14px;height:14px;background:#4a9a00"></div>

<div class="r" style="top:154px"><i></i><b class="w">to</b></div>
<div class="r" style="top:170px"><i></i><b class="e">ts</b></div>
<div class="r" style="top:186px"><i></i><b class="o">cs</b></div>
<div class="r" style="top:207px"><i></i><b>pln2t</b></div>
<div class="r" style="top:228px"><i></i><b class="o">sig2t</b></div>
<div class="r" style="top:249px"><i></i><b>pln3b</b></div>
<div class="r" style="top:270px"><i></i><b class="o">sig3b<span style="right:1px;top:4px;width:3px;height:3px;border:1px solid #222;background:#ffc34f"></span></b></div>
<div class="r" style="top:286px"><i></i><b class="o">ss</b></div>
<div class="r" style="top:302px"><i></i><b class="e">bs</b></div>
<div class="r" style="top:323px"><i></i><b class="s">drl</b></div>
<div class="r" style="top:339px"><i></i><b class="s">ldi</b></div>
<div class="r" style="top:355px"><i></i><b class="l">rout</b></div>
<div class="r" style="top:376px"><i></i><b>edgeplating</b></div>
<div class="r" style="top:392px"><i></i><b>mill</b></div>
<div class="r" style="top:408px"><i></i><b>outline</b></div>
<div class="r" style="top:424px"><i></i><b>pthrou</b></div>
<div class="r" style="top:445px"><i></i><b class="s">2rd</b></div>
<div class="r" style="top:466px"><i></i><b>tp</b></div>
<div class="r" style="top:487px"><i></i><b class="s">szdrl</b></div>
<div class="r" style="top:508px"><i></i><b>dkt</b></div>
<div class="r" style="top:524px"><i></i><b>dkb</b></div>
<div class="r" style="top:540px"><i></i><b>dwk</b></div>
<div class="r" style="top:556px"><i></i><b>d</b></div>
<div class="r" style="top:572px"><i></i><b>to.d</b></div>
<div class="r" style="top:588px"><i></i><b>ts.d</b></div>
<div class="r" style="top:604px"><i></i><b>cs.d</b></div>
<div class="r" style="top:620px"><i></i><b>sig2t.d</b></div>
<div class="r" style="top:636px"><i></i><b>sig3b.d</b></div>
<div class="r" style="top:652px"><i></i><b>ss.d</b></div>
<div class="r" style="top:668px"><i></i><b>bs.d</b></div>
<div class="r" style="top:684px"><i></i><b>drl.d</b></div>
<div class="r" style="top:700px"><i></i><b>rout.d</b></div>
<div class="r" style="top:716px"><i></i><b>edgeplating</b></div>
<div class="r" style="top:732px"><i></i><b>mill.d</b></div>
<div class="r" style="top:748px"><i></i><b>outline.d</b></div>
<div class="r" style="top:764px"><i></i><b>12121</b></div>
<div class="r" style="top:780px"><i></i><b>12121+++</b></div>

<div id="tip"><span>此处间距请优化大一点！削一点点包边焊</span><span>盘！</span></div>

<div class="t" style="left:98px;top:984px;font:bold 13px/16px 'Liberation Mono',monospace;letter-spacing:.3px">X Y :</div>
<div class="t" style="left:352px;top:984px;font:bold 12px/16px 'Liberation Mono',monospace;letter-spacing:-.23px">&lt;M1&gt; - Select first area corner</div>
<div class="t" style="left:1853px;top:984px;font:bold 15px/17px 'Liberation Mono',monospace">Inch</div>
<div class="t" style="left:0;width:1920px;top:1017px;text-align:center;font:bold 12px/16px 'Liberation Mono',monospace;letter-spacing:-.2px">Net 32 contains 4 shapes</div>
</body></html>
